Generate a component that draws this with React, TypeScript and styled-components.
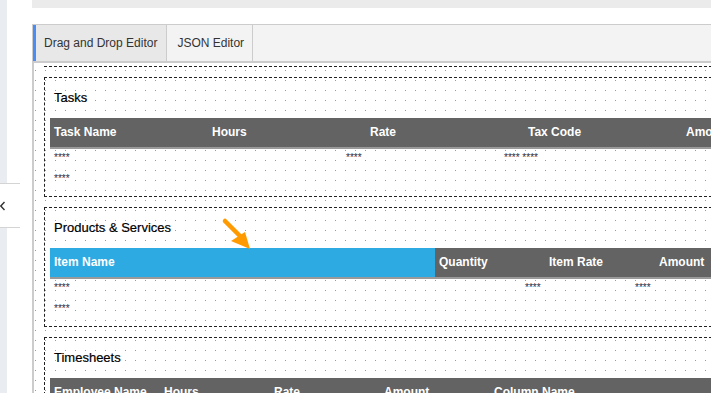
import React from 'react';
import styled, { createGlobalStyle } from 'styled-components';

const GlobalStyle = createGlobalStyle`
  html, body {
    margin: 0;
    padding: 0;
    background: #fff;
    overflow: hidden;
    font-family: "Liberation Sans", Arial, sans-serif;
  }
  * { box-sizing: border-box; }
`

const Page = styled.div`
  position: relative;
  display: flex;
  width: 711px;
  height: 393px;
  overflow: hidden;
`

const Sidebar = styled.div`
  position: relative;
  flex: none;
  width: 7px;
  background: #e9ecf0;
`

const CollapseTab = styled.div`
  position: absolute;
  left: 0;
  top: 183px;
  width: 20px;
  height: 45px;
  background: #fff;
  border-top: 1px solid #d4d4d4;
  border-bottom: 1px solid #d4d4d4;
  display: flex;
  align-items: center;
`

const Gutter = styled.div`
  flex: none;
  width: 25px;
`

const Main = styled.div`
  flex: none;
  width: 1000px;
  display: flex;
  flex-direction: column;
  overflow: hidden;
`

const TopBar = styled.div`
  flex: none;
  height: 8px;
  background: #ebebeb;
`

const TopGap = styled.div`
  flex: none;
  height: 16px;
`

const Editor = styled.div`
  flex: none;
  display: flex;
  flex-direction: column;
  border-top: 1px solid #ccc;
  border-left: 1px solid #ccc;
`

const TabBar = styled.div`
  flex: none;
  display: flex;
  height: 38px;
  background: #f3f3f3;
  border-bottom: 2px solid #ccc;
`

const Tab = styled.div<{ active?: boolean }>`
  display: flex;
  align-items: center;
  padding: 0 ${(p) => (p.active ? '9px 0 8px' : '8px 0 10px')};
  font-size: 12px;
  color: #333;
  background: ${(p) => (p.active ? '#e8e8e8' : '#f3f3f3')};
  border-left: ${(p) => (p.active ? '3px solid #4a8cf5' : 'none')};
  border-right: 1px solid #ccc;
`

const Canvas = styled.div`
  flex: none;
  padding: 3px 0 20px;
  border-left: 1px solid #ccc;
  background-image: radial-gradient(circle at 1.5px 1.5px, #999 0.55px, transparent 0.85px);
  background-size: 10px 10px;
  background-position: 0 6px;
`

const TopRule = styled.div`
  margin-left: 10px;
  border-top: 1px dashed #222;
`

const Section = styled.div`
  margin: 10px 0 0 10px;
  padding: 0 0 5px 5px;
  border: 1px dashed #222;
`

const SectionTitle = styled.div`
  height: 40px;
  line-height: 40px;
  padding-left: 4px;
  font-size: 13px;
  color: #000;
  -webkit-text-stroke: 0.2px #000;
`

const Header = styled.div`
  display: flex;
  height: 31px;
  background: #636363;
  border-bottom: 2px solid #9a9a9a;
`

const HeadCell = styled.div<{ w: number; highlight?: boolean }>`
  flex: none;
  width: ${(p) => p.w}px;
  padding-left: 4px;
  line-height: 29px;
  font-size: 12px;
  font-weight: bold;
  color: #fff;
  white-space: nowrap;
  background: ${(p) => (p.highlight ? '#2eaae2' : 'transparent')};
`

const Row = styled.div`
  display: flex;
  height: 21px;
`

const Cell = styled.div<{ w: number }>`
  flex: none;
  width: ${(p) => p.w}px;
  padding-left: 4px;
  line-height: 18px;
  font-size: 10px;
  color: #2a2a44;
  white-space: nowrap;
`

const Arrow = styled.svg`
  position: absolute;
  left: 220px;
  top: 216px;
`

type Col = { label: string; w: number; highlight?: boolean }

const tables: { title: string; cols: Col[]; rows: { text: string; w: number }[][] }[] = [
  {
    title: 'Tasks',
    cols: [
      { label: 'Task Name', w: 158 },
      { label: 'Hours', w: 158 },
      { label: 'Rate', w: 158 },
      { label: 'Tax Code', w: 158 },
      { label: 'Amount', w: 158 },
    ],
    rows: [
      [
        { text: '****', w: 292 },
        { text: '****', w: 158 },
        { text: '**** ****', w: 158 },
      ],
      [{ text: '****', w: 292 }],
    ],
  },
  {
    title: 'Products & Services',
    cols: [
      { label: 'Item Name', w: 385, highlight: true },
      { label: 'Quantity', w: 110 },
      { label: 'Item Rate', w: 110 },
      { label: 'Amount', w: 110 },
    ],
    rows: [
      [
        { text: '****', w: 471 },
        { text: '****', w: 110 },
        { text: '****', w: 110 },
      ],
      [{ text: '****', w: 471 }],
    ],
  },
  {
    title: 'Timesheets',
    cols: [
      { label: 'Employee Name', w: 110 },
      { label: 'Hours', w: 110 },
      { label: 'Rate', w: 110 },
      { label: 'Amount', w: 110 },
      { label: 'Column Name', w: 110 },
    ],
    rows: [],
  },
]

export default function App() {
  return (
    <>
      <GlobalStyle />
      <Page>
        <Sidebar>
          <CollapseTab>
            <svg width="6" height="10" viewBox="0 0 6 10">
              <path d="M4.5 1 L0.8 5 L4.5 9" fill="none" stroke="#333" strokeWidth="1.4" />
            </svg>
          </CollapseTab>
        </Sidebar>
        <Gutter />
        <Main>
          <TopBar />
          <TopGap />
          <Editor>
            <TabBar>
              <Tab active>Drag and Drop Editor</Tab>
              <Tab>JSON Editor</Tab>
            </TabBar>
            <Canvas>
              <TopRule />
              {tables.map((t) => (
                <Section key={t.title}>
                  <SectionTitle>{t.title}</SectionTitle>
                  <Header>
                    {t.cols.map((c) => (
                      <HeadCell key={c.label} w={c.w} highlight={c.highlight}>
                        {c.label}
                      </HeadCell>
                    ))}
                  </Header>
                  {t.rows.map((r, i) => (
                    <Row key={i}>
                      {r.map((c, j) => (
                        <Cell key={j} w={c.w}>
                          {c.text}
                        </Cell>
                      ))}
                    </Row>
                  ))}
                </Section>
              ))}
            </Canvas>
          </Editor>
        </Main>
        <Arrow width="36" height="36" viewBox="0 0 36 36">
          <line x1="5" y1="5" x2="20" y2="20" stroke="#ff9a00" strokeWidth="4.5" strokeLinecap="round" />
          <polygon points="30,33 11,25 25,16" fill="#ff9a00" />
        </Arrow>
      </Page>
    </>
  )
}
